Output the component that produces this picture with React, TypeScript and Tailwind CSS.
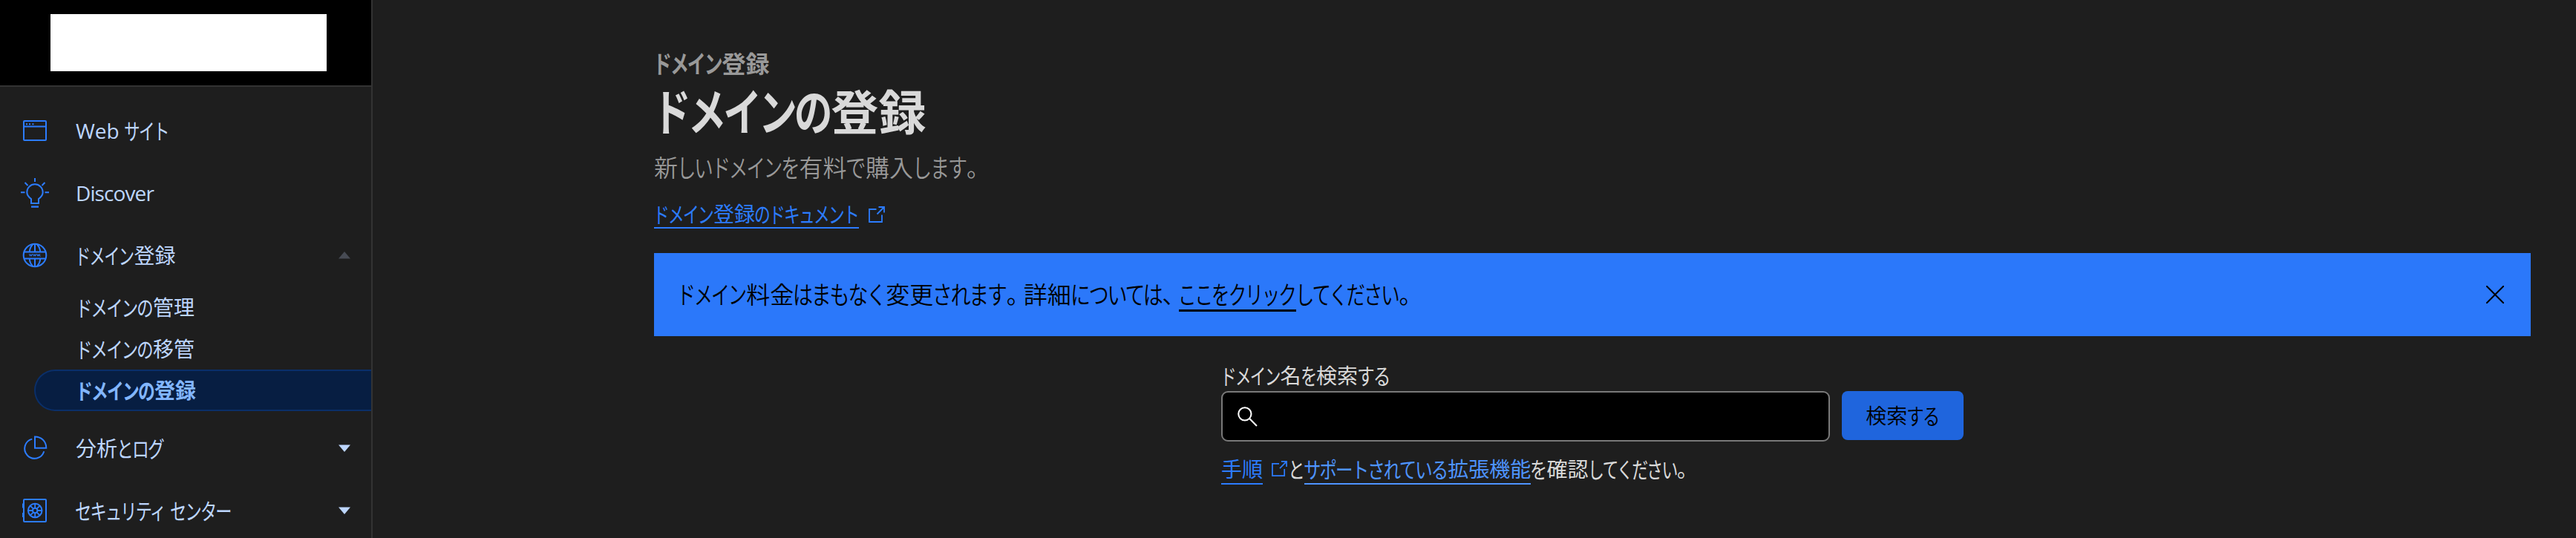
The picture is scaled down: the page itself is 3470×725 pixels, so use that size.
import type { ReactNode } from "react";

/** Letter spacing that trims the side bearings of full-width kana, in em. */
const TRIM = 0.08;

/**
 * Sets kana narrower than kanji. `k` is the kana advance in em,
 * either one value or one for each kana run in reading order.
 */
function Jp({ text, k = 0.73 }: { text: string; k?: number | number[] }) {
  const runs = text.match(/[\u3040-\u30ff]+|[\u3001\u3002]|[^\u3001\u3002\u3040-\u30ff]+/g) ?? [];
  let kana = 0;
  return (
    <span className="whitespace-pre">
      {runs.map((run, i) => {
        if (/^[\u3001\u3002]/.test(run)) {
          return (
            <span key={i} className="inline-block pr-[0.22em] [font-feature-settings:'halt']">
              {run}
            </span>
          );
        }
        if (!/^[\u3040-\u30ff]/.test(run)) return <span key={i}>{run}</span>;
        const advance = typeof k === "number" ? k : k[Math.min(kana++, k.length - 1)];
        const scale = advance / (1 - TRIM);
        const shift = (TRIM / 2) * scale;
        return (
          <span
            key={i}
            className="inline-block origin-left"
            style={{
              letterSpacing: `${-TRIM}em`,
              transform: `scale(${scale}, 1.05)`,
              marginLeft: `${-shift}em`,
              marginRight: `${shift - (1 - TRIM - advance) * run.length}em`,
            }}
          >
            {run}
          </span>
        );
      })}
    </span>
  );
}

function WindowIcon() {
  return (
    <svg width="40" height="40" viewBox="0 0 40 40" fill="none" stroke="#2c7cff" strokeWidth="2">
      <rect x="6" y="7" width="30" height="26" rx="1" />
      <path d="M6 14.5h30" />
      <path d="M9 11.2h2M13 11.2h2M17.4 11.2h2" />
    </svg>
  );
}

function BulbIcon() {
  return (
    <svg width="40" height="40" viewBox="0 0 40 40" fill="none" stroke="#2c7cff" strokeWidth="2">
      <path d="M16 34v-6c-3.400-2.300-5.700-4.900-5.700-9a10.700 10.700 0 0 1 21.400 0c0 4.100-2.300 6.700-5.700 9v6z" />
      <path d="M16 38.600h10" strokeWidth="2.400" />
      <path d="M21 0v5M2 19.200h5.500M34.500 19.200H40M7.500 6l4 4M34.500 6l-4 4" />
    </svg>
  );
}

function GlobeIcon() {
  return (
    <svg width="40" height="40" viewBox="0 0 40 40" fill="none" stroke="#2c7cff" strokeWidth="2">
      <circle cx="21" cy="20" r="15.300" />
      <path d="M7 15.500h28M7 24.500h28M21 5v10.500M21 24.500V35" />
      <path d="M18 5.500c-2.500 2.500-4 6-4.300 10M24 5.500c2.500 2.500 4 6 4.300 10M18 34.500c-2.500-2.500-4-6-4.300-10M24 34.500c2.500-2.500 4-6 4.300-10" />
      <path d="M13.500 18.200l1 3 1-2.500 1 2.500 1-3M18.700 18.200l1 3 1-2.500 1 2.500 1-3M23.800 18.200l1 3 1-2.500 1 2.500 1-3M28.500 20.700v.8" strokeWidth="1" />
    </svg>
  );
}

function PieIcon() {
  return (
    <svg width="40" height="40" viewBox="0 0 40 40" fill="none" stroke="#2c7cff" strokeWidth="2">
      <path d="M21 4.500v15.300h15.300c0-9-6.500-15.300-15.300-15.300z" />
      <path d="M17.300 7.600A13.300 13.300 0 1 0 33.300 24.200" />
    </svg>
  );
}

function SafeIcon() {
  return (
    <svg width="40" height="40" viewBox="0 0 40 40" fill="none" stroke="#2c7cff" strokeWidth="2">
      <rect x="6" y="5" width="30" height="30" rx="1" />
      <path d="M5 10.500v6M5 23v6" />
      <circle cx="21.200" cy="20" r="9.300" />
      <circle cx="21.200" cy="20" r="3.200" />
      <path d="M21.200 10.700v6M21.200 23.300v6M11.900 20h6M24.500 20h6M14.600 13.400l4.300 4.300M27.800 13.400l-4.300 4.300M14.600 26.600l4.300-4.300M27.800 26.600l-4.300-4.300" strokeWidth="1.800" />
    </svg>
  );
}

function ExternalIcon({ size }: { size: number }) {
  return (
    <svg width={size} height={size} viewBox="0 0 22 22" fill="none" stroke="#2c7cff" strokeWidth="1.800">
      <path d="M10.500 4H1v17h17v-9.500" />
      <path d="M11.500 10.500L21 1M13.500 1H21v7.500" />
    </svg>
  );
}

function Caret({ up = false }: { up?: boolean }) {
  return (
    <svg width="16" height="10" viewBox="0 0 16 10" className={up ? "fill-[#474b54]" : "fill-[#bdd6ff]"}>
      <path d={up ? "M0 9.500L8 0l8 9.500z" : "M0 .5h16L8 10z"} />
    </svg>
  );
}

function NavItem({ icon, caret, children }: { icon: ReactNode; caret?: ReactNode; children: ReactNode }) {
  return (
    <a className="flex h-[84px] items-center pr-7 pl-[26px] text-[28px] text-[#bdd6ff]">
      {icon}
      <span className="ml-9 flex-1 leading-none">{children}</span>
      {caret}
    </a>
  );
}

function Sidebar() {
  return (
    <aside className="flex h-full w-[502px] shrink-0 flex-col overflow-hidden border-r-2 border-[#333333]">
      <div className="h-[117px] shrink-0 border-b-2 border-[#333333] bg-black pt-[19px] pl-[68px]">
        <div className="h-[77px] w-[372px] bg-white" />
      </div>
      <nav className="flex flex-col pt-[17px]">
        <NavItem icon={<WindowIcon />}>
          <Jp text="Web サイト" k={0.71} />
        </NavItem>
        <NavItem icon={<BulbIcon />}>
          <span className="tracking-[-0.9px]">Discover</span>
        </NavItem>
        <NavItem icon={<GlobeIcon />} caret={<Caret up />}>
          <Jp text="ドメイン登録" k={0.7} />
        </NavItem>
        <div className="mb-2 flex flex-col text-[28px] leading-none text-[#bdd6ff]">
          <a className="flex h-14 items-center pl-[103px]">
            <Jp text="ドメインの管理" k={0.735} />
          </a>
          <a className="flex h-14 items-center pl-[103px]">
            <Jp text="ドメインの移管" k={0.735} />
          </a>
          <a className="ml-[46px] flex h-14 items-center rounded-l-full border-2 border-r-0 border-[#0a2f69] bg-[#071e42] pl-[55px] font-bold text-[#82b6ff]">
            <Jp text="ドメインの登録" k={0.75} />
          </a>
        </div>
        <NavItem icon={<PieIcon />} caret={<Caret />}>
          <Jp text="分析とログ" k={0.75} />
        </NavItem>
        <NavItem icon={<SafeIcon />} caret={<Caret />}>
          <Jp text="セキュリティ センター" k={0.73} />
        </NavItem>
      </nav>
    </aside>
  );
}

function Heading() {
  return (
    <header className="flex flex-col leading-none">
      <p className="flex h-8 items-center text-[32px] font-semibold text-[#999999]">
        <Jp text="ドメイン登録" k={0.715} />
      </p>
      <h1 className="mt-[17px] flex h-16 items-center text-[64px] font-bold text-[#d9d9d9]">
        <Jp text="ドメインの登録" k={0.745} />
      </h1>
      <p className="mt-[27px] flex h-8 items-center text-[32px] font-[350] text-[#999999]">
        <Jp text="新しいドメインを有料で購入します。" k={[0.73, 0.79, 0.75]} />
      </p>
      <div className="mt-[28px] flex h-[38px] items-start">
        <a className="flex h-[38px] items-center border-b-2 border-[#2c7cff] text-[28px] text-[#2c7cff]">
          <Jp text="ドメイン登録のドキュメント" k={0.715} />
        </a>
        <span className="mt-2 ml-[13px]">
          <ExternalIcon size={22} />
        </span>
      </div>
    </header>
  );
}

function Banner() {
  return (
    <div className="flex h-28 items-center justify-between bg-[#2b78fa] pr-9 pl-8 text-[32px] leading-none font-[350] text-black">
      <p className="flex items-center">
        <Jp text="ドメイン料金はまもなく変更されます。詳細については、" k={[0.72, 0.775, 0.77, 0.775]} />
        <a className="flex h-[46px] items-center border-b-3 border-black pt-[3px]">
          <Jp text="ここをクリック" k={0.705} />
        </a>
        <Jp text="してください。" k={0.73} />
      </p>
      <svg width="24" height="24" viewBox="0 0 24 24" stroke="#000000" strokeWidth="2" strokeLinecap="round">
        <path d="M.8.8l22.400 22.400M23.200.8L.8 23.200" />
      </svg>
    </div>
  );
}

function DomainSearch() {
  return (
    <section className="ml-[764px] flex flex-col leading-none text-[#d9d9d9]">
      <label className="flex h-7 items-center text-[28px]">
        <Jp text="ドメイン名を検索する" k={[0.71, 0.73, 0.78]} />
      </label>
      <div className="mt-[7px] flex items-start gap-4">
        <div className="flex h-[68px] w-[820px] items-center rounded-[9px] border-2 border-[#797979] bg-black pl-[20px]">
          <svg width="27" height="27" viewBox="0 0 26 26" fill="none" stroke="#ffffff" strokeWidth="2">
            <circle cx="9.500" cy="9.500" r="8.300" />
            <path d="M15.500 15.500l9.500 9.500" />
          </svg>
        </div>
        <button className="flex h-[66px] w-[164px] items-center justify-center rounded-lg bg-[#1f65dd] text-[28px] leading-none font-[350] text-black">
          <Jp text="検索する" k={0.78} />
        </button>
      </div>
      <p className="mt-[17px] flex h-[41px] items-start text-[28px]">
        <a className="flex h-[41px] items-center border-b-2 border-[#2c7cff] text-[#2c7cff]">
          <Jp text="手順" />
        </a>
        <span className="mt-[9px] mr-0.5 ml-3">
          <ExternalIcon size={21} />
        </span>
        <span className="flex h-[39px] items-center">
          <Jp text="と" k={0.75} />
        </span>
        <a className="flex h-[41px] items-center border-b-2 border-[#4e94ff] text-[#4e94ff]">
          <Jp text="サポートされている拡張機能" k={0.77} />
        </a>
        <span className="flex h-[39px] items-center">
          <Jp text="を確認してください。" k={[0.76, 0.72]} />
        </span>
      </p>
    </section>
  );
}

export default function App() {
  return (
    <div className="flex h-[725px] w-[3470px] overflow-hidden bg-[#1e1e1e] font-['Open_Sans','Noto_Sans_CJK_JP',sans-serif]">
      <Sidebar />
      <main className="flex flex-1 flex-col pt-[70px] pr-[61px] pl-[379px]">
        <Heading />
        <div className="mt-[33px] mb-[39px]">
          <Banner />
        </div>
        <DomainSearch />
      </main>
    </div>
  );
}
